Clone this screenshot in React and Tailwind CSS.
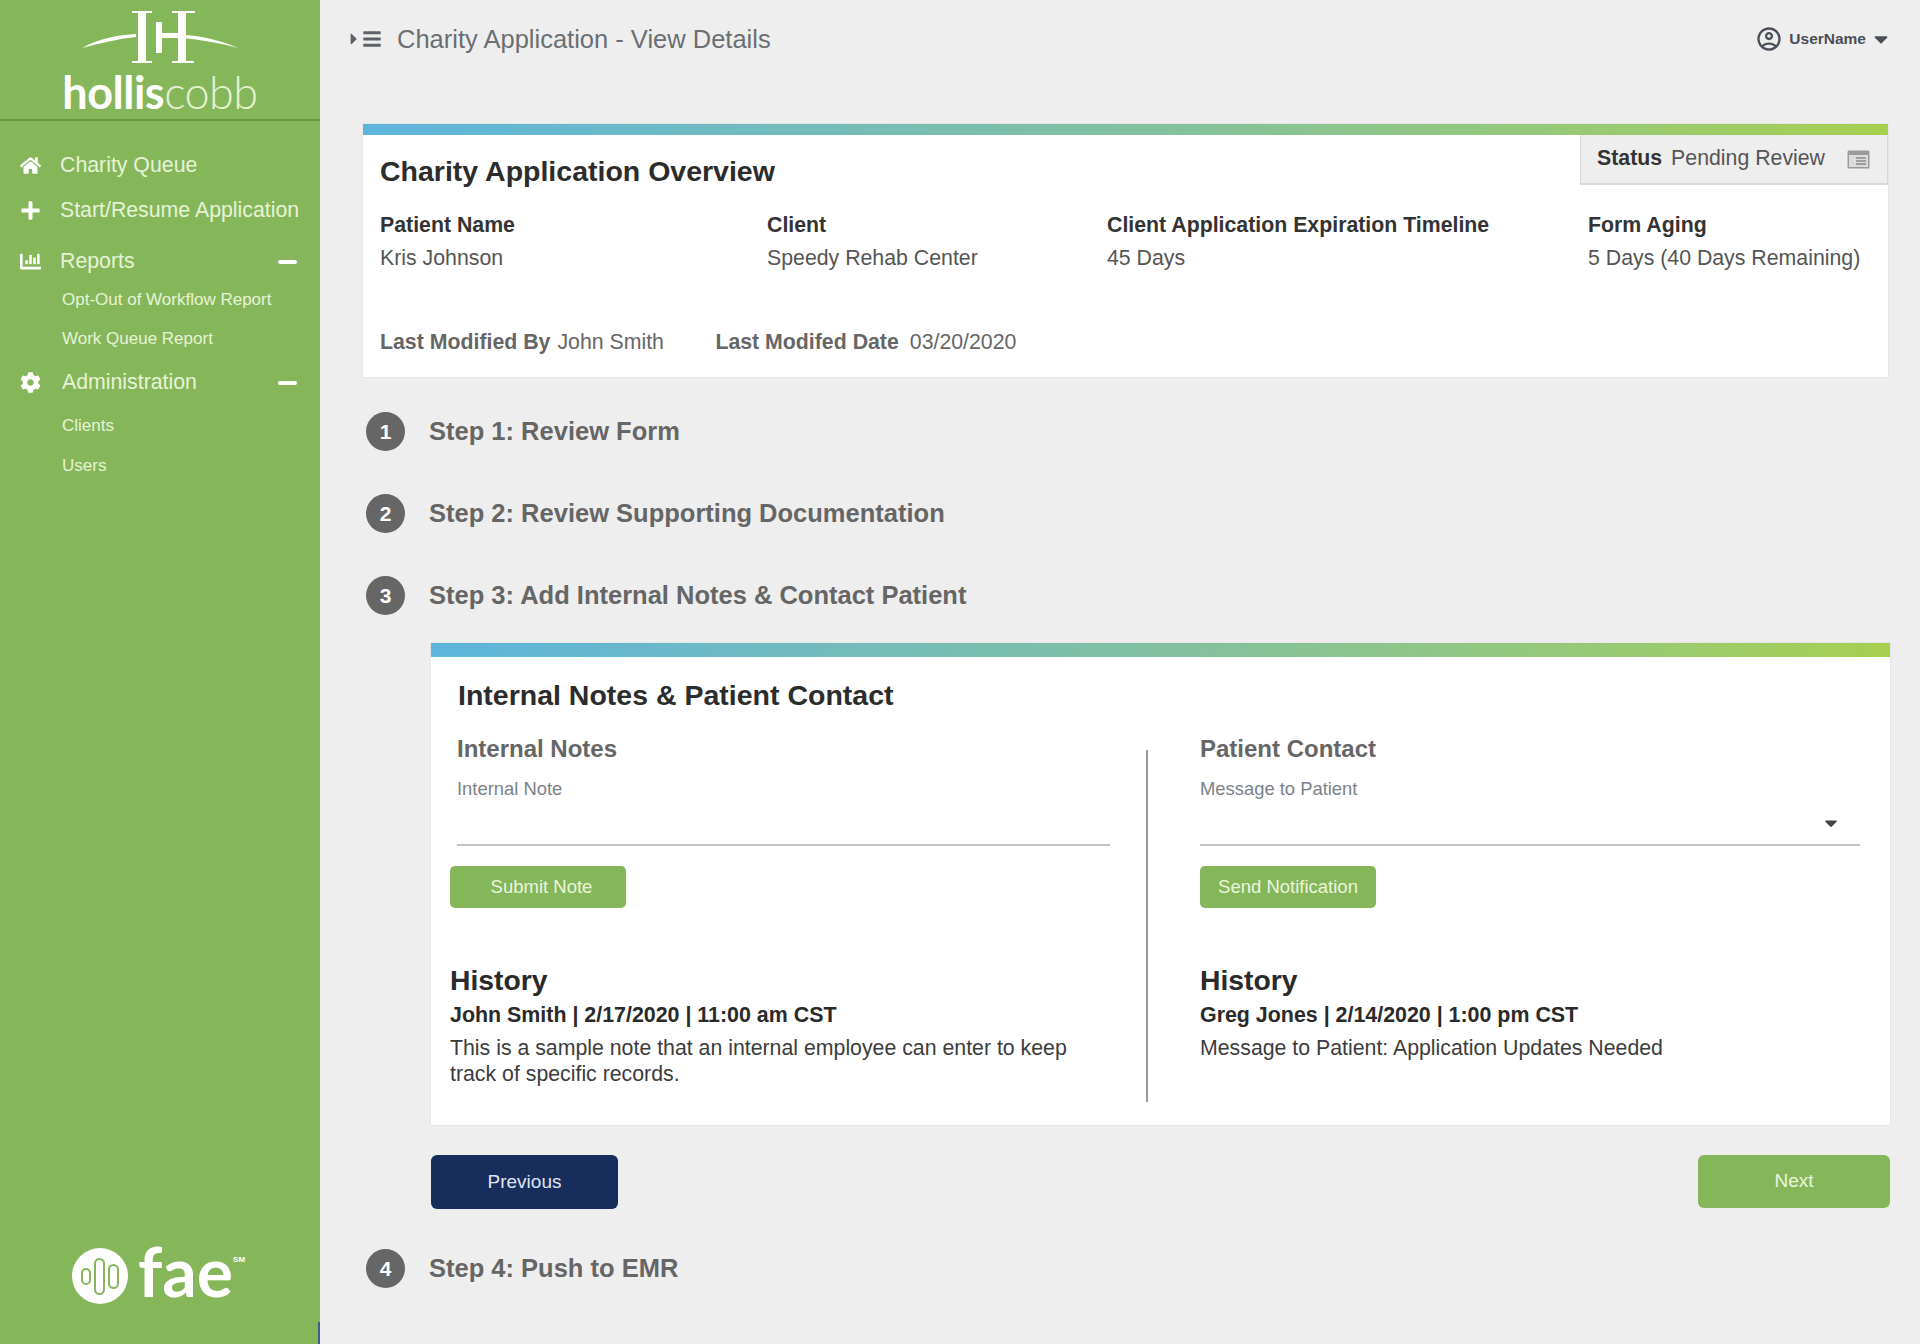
import React from "react";
import { FaHome, FaPlus, FaChartBar, FaCog, FaCaretDown, FaCaretRight, FaBars } from "react-icons/fa";
import { MdOutlineAccountCircle } from "react-icons/md";

const GRADIENT = "bg-gradient-to-r from-[#5db5dc] via-[#82c0a0] to-[#a6cf4e]";

function HollisLogo() {
  return (
    <div className="flex flex-col items-center h-[119px]">
      <svg width="156" height="54" viewBox="0 0 156 54" className="mt-[11px] fill-white">
        <path d="M0 37 C 18 27 36 24 54 23 L54 26 C 36 28 18 32 0 37 Z" />
        <path d="M156 37 C 138 29 120 25 102 24 L102 27 C 120 29 138 32 156 37 Z" />
        <path d="M50 0 H70 V2 H64 V50 H70 V52 H50 V50 H56 V2 H50 Z" />
        <path d="M74 11 H80 V22 H96 V2 H90 V0 H113 V2 H104 V50 H112 V52 H90 V50 H96 V27 H80 V42 H74 Z" />
      </svg>
      <div className="mt-[5px] text-[45px] leading-[44px] tracking-[-0.5px] text-white font-['Lato',sans-serif]">
        <span className="font-bold">hollis</span>
        <span className="font-light text-[#e4f2d2]">cobb</span>
      </div>
    </div>
  );
}

function NavItem({ icon, label, h, collapsible, indent = "pl-[60px]" }) {
  return (
    <div className={`relative flex items-center text-[21.3px] text-[#e6f3d6] ${h} ${indent}`}>
      <span className="absolute left-[20px] -mt-[1px] text-white text-[21px]">{icon}</span>
      <span>{label}</span>
      {collapsible && <span className="absolute right-[23px] w-[19px] h-[4px] rounded-sm bg-white" />}
    </div>
  );
}

function SubItem({ label, h }) {
  return <div className={`flex items-center pl-[62px] text-[17px] text-[#e6f3d6] ${h}`}>{label}</div>;
}

function Sidebar() {
  return (
    <aside className="relative w-[320px] shrink-0 bg-[#85b75a] flex flex-col h-[1344px]">
      <HollisLogo />
      <div className="h-[2px] bg-[#6a9c44]" />
      <nav className="pt-[23px]">
        <NavItem icon={<FaHome />} label="Charity Queue" h="h-[44px]" />
        <NavItem icon={<FaPlus />} label="Start/Resume Application" h="h-[46px]" />
        <NavItem icon={<FaChartBar />} label="Reports" h="h-[50px] mt-[3px]" collapsible />
        <SubItem label="Opt-Out of Workflow Report" h="h-[26px]" />
        <SubItem label="Work Queue Report" h="h-[40px] mt-[6px]" />
        <NavItem icon={<FaCog />} label="Administration" h="h-[46px] mt-[1px]" collapsible indent="pl-[62px]" />
        <SubItem label="Clients" h="h-[40px]" />
        <SubItem label="Users" h="h-[40px]" />
      </nav>
      <div className="mt-auto mb-[38px] flex items-center justify-center pl-[4px] pr-[7px]">
        <svg width="56" height="56" viewBox="0 0 56 56" className="mt-[10px]">
          <circle cx="28" cy="28" r="28" fill="#fff" />
          <g fill="none" stroke="#85b75a" strokeWidth="2">
            <rect x="10" y="21" width="8" height="15" rx="4" />
            <rect x="23" y="11" width="9" height="35" rx="4.5" />
            <rect x="37" y="17" width="9" height="23" rx="4.5" />
          </g>
        </svg>
        <span className="ml-[10px] text-[68px] leading-[70px] font-bold text-white font-['Lato',sans-serif]">fae</span>
        <span className="self-start mt-[18px] text-[8px] font-bold text-white">SM</span>
      </div>
      <div className="absolute right-0 bottom-0 w-[2px] h-[22px] bg-[#3f5f86]" />
    </aside>
  );
}

function Field({ label, value }) {
  return (
    <div>
      <div className="h-[33px] font-bold text-[#333]">{label}</div>
      <div className="text-[#555]">{value}</div>
    </div>
  );
}

function Step({ n, label, className = "" }) {
  return (
    <div className={`flex items-center h-[39px] ${className}`}>
      <div className="w-[39px] h-[39px] ml-[3px] rounded-full bg-[#666] text-white font-bold text-[21px] flex items-center justify-center">{n}</div>
      <div className="ml-[24px] text-[25.5px] font-bold text-[#666]">{label}</div>
    </div>
  );
}

function ContactColumn({ heading, label, select, button, author, children, className, textClass, buttonClass }) {
  return (
    <div className={className}>
      <div className="h-[28px] leading-[28px] text-[24px] font-bold text-[#666] pl-[var(--inset)]">{heading}</div>
      <div className="mt-[16px] h-[20px] leading-[20px] text-[18.4px] text-[#7b8289] pl-[var(--inset)]">{label}</div>
      <div className="ml-[var(--inset)] mr-[var(--end)] h-[47px] border-b-2 border-[#c4c4c4] flex items-center justify-end pr-[19px]">
        {select && <FaCaretDown className="text-[#444] text-[20px] mt-[3px]" />}
      </div>
      <button className={`mt-[20px] w-[176px] h-[42px] rounded-[5px] bg-[#85b75a] text-[18.5px] text-[#eaf5dd] ${buttonClass}`}>{button}</button>
      <div className="mt-[56px] h-[32px] leading-[32px] text-[28.3px] font-bold text-[#2a2a2a]">History</div>
      <div className="mt-[7px] h-[24px] leading-[24px] text-[21.4px] font-bold text-[#2a2a2a]">{author}</div>
      <div className={`mt-[8px] leading-[26px] text-[21.3px] text-[#3c3c3c] ${textClass}`}>{children}</div>
    </div>
  );
}

export default function App() {
  return (
    <div className="flex w-[1920px] h-[1344px] overflow-hidden bg-[#eeeeee] font-['Liberation_Sans',Arial,sans-serif]">
      <Sidebar />
      <main className="flex-1 pl-[43px] pr-[32px]">
        <header className="flex items-center justify-between h-[78px] mb-[46px] -ml-[16px] pr-0">
          <div className="flex items-center text-[#5d6168]">
            <FaCaretRight className="text-[18px] -ml-[2px] -mr-[1px]" />
            <FaBars className="text-[20px]" />
            <span className="ml-[15px] text-[25.5px] text-[#6b6e72]">Charity Application - View Details</span>
          </div>
          <div className="flex items-center text-[#4a4e58] -mr-[4px]">
            <MdOutlineAccountCircle className="text-[28px]" />
            <span className="ml-[6px] text-[15.5px] font-bold">UserName</span>
            <FaCaretDown className="ml-[4px] text-[22px]" />
          </div>
        </header>

        <section className="relative h-[253px] bg-white shadow-[0_0_1px_rgba(0,0,0,0.2)]">
          <div className={`h-[11px] ${GRADIENT}`} />
          <div className="absolute right-0 top-[11px] w-[308px] h-[50px] flex items-center bg-[#eeeeee] border border-t-0 border-b-2 border-[#d8d8d8] pl-[16px] text-[21.3px]">
            <span className="font-bold text-[#333]">Status</span>
            <span className="ml-[9px] text-[#555]">Pending Review</span>
            <svg width="23" height="19" viewBox="0 0 23 19" className="ml-[22px]">
              <rect x="0.5" y="0.5" width="22" height="18" rx="1.5" fill="#9a9a9a" />
              <rect x="2" y="5" width="19" height="12" fill="#dcdcdc" />
              <path d="M9 8h10M9 11h10M9 14h10" stroke="#8a8a8a" strokeWidth="1.5" />
            </svg>
          </div>
          <h1 className="pl-[17px] mt-[19px] h-[34px] leading-[34px] text-[28.5px] font-bold text-[#2c2c2c]">Charity Application Overview</h1>
          <div className="grid grid-cols-[387px_340px_481px_1fr] pl-[17px] mt-[25px] text-[21.3px] leading-[24px]">
            <Field label="Patient Name" value="Kris Johnson" />
            <Field label="Client" value="Speedy Rehab Center" />
            <Field label="Client Application Expiration Timeline" value="45 Days" />
            <Field label="Form Aging" value="5 Days (40 Days Remaining)" />
          </div>
          <div className="flex pl-[17px] mt-[60px] text-[21.3px] leading-[24px] text-[#666]">
            <span className="font-bold">Last Modified By</span>
            <span className="ml-[7px] w-[158px]">John Smith</span>
            <span className="font-bold">Last Modifed Date</span>
            <span className="ml-[11px]">03/20/2020</span>
          </div>
        </section>

        <Step n="1" label="Step 1: Review Form" className="mt-[35px]" />
        <Step n="2" label="Step 2: Review Supporting Documentation" className="mt-[43px]" />
        <Step n="3" label="Step 3: Add Internal Notes & Contact Patient" className="mt-[43px]" />

        <section className="ml-[68px] -mr-[2px] mt-[28px] h-[482px] bg-white shadow-[0_0_1px_rgba(0,0,0,0.2)]">
          <div className={`h-[14px] ${GRADIENT}`} />
          <h2 className="pl-[27px] mt-[21px] h-[34px] leading-[34px] text-[28.5px] font-bold text-[#2c2c2c]">Internal Notes & Patient Contact</h2>
          <div className="flex mt-[23px]">
            <ContactColumn
              className="w-[679px] ml-[19px] mr-[17px] [--inset:7px] [--end:19px]"
              heading="Internal Notes"
              label="Internal Note"
              button="Submit Note"
              buttonClass="pl-[7px]"
              author="John Smith | 2/17/2020 | 11:00 am CST"
              textClass="max-w-[640px]"
            >
              This is a sample note that an internal employee can enter to keep track of specific records.
            </ContactColumn>
            <div className="w-[2px] h-[352px] mt-[15px] bg-[#9a9a9a]" />
            <ContactColumn
              className="w-[660px] ml-[52px] [--inset:0px] [--end:0px]"
              heading="Patient Contact"
              label="Message to Patient"
              select
              button="Send Notification"
              author="Greg Jones | 2/14/2020 | 1:00 pm CST"
            >
              Message to Patient: Application Updates Needed
            </ContactColumn>
          </div>
        </section>

        <div className="ml-[68px] -mr-[2px] mt-[30px] flex justify-between items-start">
          <button className="w-[187px] h-[54px] rounded-md bg-[#172e5c] text-[19px] text-[#dfe5f2]">Previous</button>
          <button className="w-[192px] h-[53px] rounded-md bg-[#85b75a] text-[19px] text-[#eaf5dd]">Next</button>
        </div>

        <Step n="4" label="Step 4: Push to EMR" className="mt-[40px]" />
      </main>
    </div>
  );
}
